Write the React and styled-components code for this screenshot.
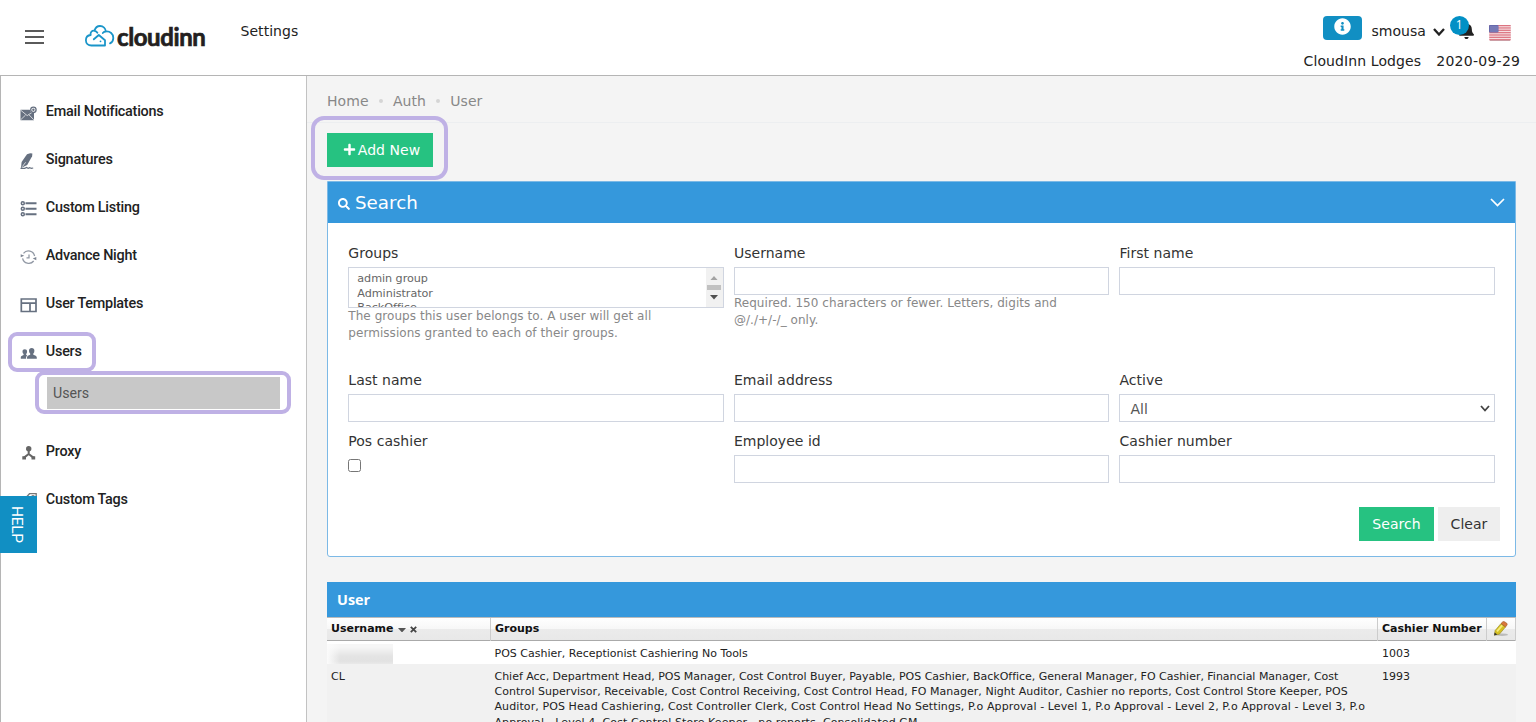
import React from "react";
import styled, { createGlobalStyle } from "styled-components";
import { FaPlus, FaSearch, FaBell, FaInfoCircle } from "react-icons/fa";

const sans = `Verdana, "DejaVu Sans", sans-serif`;
const blue = "#3598dc";
const green = "#26c281";

const Global = createGlobalStyle`
  *, *::before, *::after { box-sizing: border-box; }
  body { margin: 0; background: #f4f4f4; font-family: ${sans}; font-size: 14px; color: #333; overflow: hidden; }
`;

const Page = styled.div`
  position: relative;
  height: 722px;
  overflow: hidden;
  display: flex;
  flex-direction: column;
`;

const Header = styled.header`
  flex: none;
  height: 76px;
  display: flex;
  background: #fff;
  border-bottom: 1px solid #b5b5b5;
  color: #222;
`;

const Burger = styled.button`
  width: 19px;
  height: 14px;
  margin: 30px 0 0 25px;
  padding: 0;
  border: 0;
  background: none;
  display: flex;
  flex-direction: column;
  justify-content: space-between;
  span { height: 2px; background: #5a5a5a; }
`;

const Logo = styled.div`
  display: flex;
  width: 121px;
  margin: 24px 0 0 41px;
  svg { flex: none; margin-top: 1px; }
`;

const Wordmark = styled.span`
  font: 700 24px/27px Lato, sans-serif;
  letter-spacing: -0.4px;
  -webkit-text-stroke: 0.7px #231f20;
  color: #231f20;
  margin: -1px 0 0 2px;
`;

const NavLink = styled.span`
  margin: 22px 0 0 34.5px;
  line-height: 18px;
  font-size: 14px;
  letter-spacing: 0.05px;
`;

const HeaderRight = styled.div`
  margin-left: auto;
  padding: 14px 16px 0 0;
  display: flex;
  flex-direction: column;
`;

const Tools = styled.div`
  display: flex;
  align-items: center;
  height: 27px;
  margin-left: 19px;
`;

const InfoButton = styled.span`
  width: 39px;
  height: 24px;
  border-radius: 4px;
  background: #118fc3;
  color: #fff;
  display: flex;
  align-items: center;
  justify-content: center;
  margin-right: 10px;
  svg { margin-bottom: 2px; }
`;

const UserName = styled.span`
  font-size: 14px;
  width: 55px;
  padding-top: 7px;
`;

const Bell = styled.span`
  position: relative;
  width: 26px;
  height: 25px;
  margin-left: 5px;
  > svg { position: absolute; left: 8px; top: 7px; }
`;

const Badge = styled.span`
  position: absolute;
  left: 0;
  top: 1px;
  width: 19px;
  height: 19px;
  border-radius: 50%;
  background: #0290c5;
  color: #fff;
  font: 12px/18px "Open Sans", sans-serif;
  text-align: center;
`;

const Property = styled.div`
  display: flex;
  gap: 15px;
  line-height: 18px;
  margin-top: 11px;
  span { letter-spacing: 0.1px; }
  span + span { letter-spacing: 0.27px; margin-right: -0.27px; }
`;

const Body = styled.div`
  flex: 1;
  display: flex;
  min-height: 0;
`;

const Sidebar = styled.nav`
  flex: none;
  width: 307px;
  background: #fff;
  border-left: 1px solid #b5b5b5;
  border-right: 1px solid #c2c2c2;
  padding-top: 11px;
  font-family: Roboto, sans-serif;
`;

const NavItem = styled.div`
  height: 48px;
  display: flex;
  align-items: center;
  padding: 1px 0 0 19px;
  font-size: 14.4px;
  letter-spacing: -0.24px;
  font-weight: 500;
  color: #222;
  svg { flex: none; width: 17px; height: 17px; margin: 3px 8.8px 0 0; }
`;

const SubItem = styled.div`
  height: 32px;
  margin: 2px 26px 18px 46px;
  padding-left: 6px;
  background: #c8c8c8;
  color: #555;
  font-size: 14.2px;
  line-height: 32px;
`;

const Main = styled.main`
  flex: 1;
  min-width: 0;
  padding: 0 20px;
`;

const Breadcrumb = styled.div`
  height: 47px;
  margin: 0 -20px 10px;
  padding: 3px 20px 0;
  border-bottom: 1px solid #eceef0;
  display: flex;
  align-items: center;
  color: #888;
  font-size: 14px;
  letter-spacing: 0.05px;
  i { width: 4px; height: 4px; border-radius: 50%; background: #d5d5d5; margin: 0 10.2px; }
`;

const Button = styled.button`
  height: 34px;
  width: ${(p) => p.$w}px;
  border: 0;
  padding: 0;
  background: ${(p) => (p.$plain ? "#eee" : green)};
  color: ${(p) => (p.$plain ? "#333" : "#fff")};
  font: 14px ${sans};
  letter-spacing: 0.05px;
  display: flex;
  align-items: center;
  justify-content: center;
  gap: 2px;
`;

const AddButton = styled(Button)`
  padding-left: 3px;
  svg { margin-bottom: 1px; }
`;

const Panel = styled.section`
  height: 376px;
  margin-top: 14px;
  border: 1px solid #7cb9e6;
  border-radius: 0 0 3px 3px;
  background: #fff;
`;

const PanelHead = styled.div`
  height: 41px;
  background: ${blue};
  color: #fff;
  display: flex;
  align-items: center;
  padding: 0 10px 1px;
  font-size: 18.3px;
  svg:first-child { margin: 4px 5px 0 0; }
  svg:last-child { margin-left: auto; }
`;

const Form = styled.div`
  display: grid;
  grid-template-columns: repeat(3, 375.3px);
  column-gap: 10.3px;
  grid-template-rows: 127px 61px 61px;
  padding: 21px 20px 0 20.3px;
`;

const Field = styled.label`
  display: block;
  font-size: 14px;
  color: #333;
`;

const Label = styled.span`
  display: block;
  line-height: 18px;
  margin-bottom: 5px;
  letter-spacing: 0.03px;
`;

const Input = styled.input`
  display: block;
  width: 100%;
  height: 28px;
  border: 1px solid #d0d5e0;
  background: #fff;
`;

const Help = styled.span`
  display: block;
  width: 335px;
  font-size: 12px;
  line-height: 17px;
  letter-spacing: 0.05px;
  color: #888;
`;

const List = styled.div`
  height: 41px;
  border: 1px solid #d0d5e0;
  display: flex;
  justify-content: space-between;
  overflow: hidden;
  font-size: 11.2px;
  line-height: 14.5px;
  letter-spacing: -0.05px;
  color: #666;
`;

const Options = styled.div`
  padding: 4px 8px;
`;

const Scroll = styled.div`
  width: 17px;
  background: #f1f1f1;
  display: flex;
  flex-direction: column;
  align-items: center;
  padding-top: 7.5px;
  i { width: 14px; height: 5px; background: #c1c1c1; margin: 5px 0; }
`;

const Select = styled.div`
  height: 28px;
  border: 1px solid #d0d5e0;
  padding: 1px 4px 0 10px;
  display: flex;
  align-items: center;
  justify-content: space-between;
  color: #555;
`;

const Check = styled.span`
  display: block;
  width: 13px;
  height: 13px;
  margin-top: 9px;
  border: 1px solid #767676;
  border-radius: 2.5px;
`;

const Actions = styled.div`
  display: flex;
  justify-content: flex-end;
  gap: 4px;
  padding: 14px 15px 0;
`;

const TableTitle = styled.h2`
  margin: 25px 0 0;
  height: 35px;
  padding-left: 10px;
  background: ${blue};
  color: #fff;
  font: 700 14.4px/36px "Open Sans", sans-serif;
`;

const Row = styled.div`
  display: grid;
  grid-template-columns: 163.5px 887.5px 109px 29px;
  height: ${(p) => p.$h}px;
  background: ${(p) => p.$bg};
  color: #222;
  font-size: 11px;
  line-height: 15.2px;
`;

const HeadRow = styled(Row)`
  grid-template-columns: 164px 887px 109px 29px;
  color: #111;
  font-weight: 700;
  background: linear-gradient(#fff 0, #f7f7f7 50%, #ebebeb 51%, #e8e8e8 100%);
  border-top: 1px solid #bbb;
  border-bottom: 1px solid #aaa;
  > div { border-right: 1px solid #ccc; padding: 3px 4px 0; white-space: nowrap; }
  > div:last-child { padding-left: 6px; }
`;

const Cell = styled.div`
  padding: 5px 4px 0;
  white-space: nowrap;
`;

const Line = styled.div`
  letter-spacing: ${(p) => p.$track}px;
`;

const Redacted = styled.div`
  width: 66px;
  height: 20px;
  margin-top: 3px;
  background: linear-gradient(90deg, #fbfbfb 0, #f4f4f400 20%), linear-gradient(#f6f6f6 15%, #e4e4e4 60%, #e2e2e2 85%, #e9e9e9);
`;

const HelpTab = styled.div`
  position: absolute;
  left: 0;
  top: 496px;
  width: 37px;
  height: 57px;
  background: #118fc3;
  color: #fff;
  font: 15.5px/40px Roboto, sans-serif;
  letter-spacing: -0.3px;
  writing-mode: vertical-rl;
  text-align: center;
`;

const Highlight = styled.div`
  position: absolute;
  left: ${(p) => p.$x}px;
  top: ${(p) => p.$y}px;
  width: ${(p) => p.$w}px;
  height: ${(p) => p.$h}px;
  border: 4px solid #bfb1e5;
  border-radius: ${(p) => p.$r || 9}px;
`;

const slate = "#667080";

const CloudIcon = () => (
  <svg width="30" height="23" viewBox="0 0 30 23" fill="none" stroke="#1a95c9" strokeWidth="1.8" strokeLinecap="round" strokeLinejoin="round">
    <path d="M9.5 5.8C10.4 2.6 12.4 1 15 1c3.3 0 5.6 2.3 5.7 5.5M5.7 10C5 7.4 6.9 5.3 9.5 5.8c1.3.2 2.3.9 2.9 1.9M5.7 10C2.7 10.3.9 12.500.9 15.2c0 3.1 2.3 5.3 5.5 5.3H20v-5.200l-6.200-5.300-5 4.300M17.800 8c.7-.8 1.700-1.400 2.900-1.500 4.400-.5 7.600 2.200 7.600 6.400 0 2.300-1.100 4.300-3.300 5.500" />
    <circle cx="15.5" cy="16.3" r=".9" fill="#1a95c9" stroke="none" />
  </svg>
);

const MailIcon = () => (
  <svg viewBox="0 0 17 17" fill={slate}>
    <path d="M.5 4.700h9.300a3.700 3.700 0 0 0 4.200 3v7.500H.5z" />
    <path d="M.7 5.200l6.500 5.400 6.200-4.100M.7 14.800l4.800-4.700M13.800 14.800L9 9.800" fill="none" stroke="#fff" strokeWidth=".7" />
    <circle cx="13.400" cy="4.800" r="2.700" fill="none" stroke={slate} strokeWidth="1.300" />
    <circle cx="13.400" cy="4.800" r="1.200" />
  </svg>
);

const PenIcon = () => (
  <svg viewBox="0 0 17 17" fill={slate}>
    <path d="M10.200.2l2.200.4-.3 2.700L7.200 12.100 1 15l.6-5.900L7 1.300z" />
    <path d="M2.400 13.600L5.600 9.300" stroke="#fff" strokeWidth=".7" />
    <path d="M.5 15.300h4.200l2-.8 1.400.9 1.700-.8 1.400.8 2-.4" fill="none" stroke={slate} strokeWidth="1.200" />
  </svg>
);

const ListIcon = () => (
  <svg viewBox="0 0 17 17" fill="none" stroke={slate} strokeWidth="1.500">
    <circle cx="2.800" cy="2.300" r="1.500" /><circle cx="2.800" cy="7.800" r="1.500" /><circle cx="2.800" cy="13.300" r="1.500" />
    <path d="M5.500 2.300h11M5.500 7.800h11M5.500 13.300h11" strokeWidth="1.900" />
  </svg>
);

const NightIcon = () => (
  <svg viewBox="0 0 17 17" fill="none" stroke="#9299a5" strokeWidth="1.300">
    <path d="M3.500 4.300A6.300 6.300 0 0 1 14.600 7M13.700 12A6.300 6.300 0 0 1 2.600 9.300M9 5.500v3.300H6.500" />
    <path d="M.7 5.300v3l3.500-1.600zM16.300 8v3.200l-3.500-1.600z" fill="#7d8593" stroke="none" />
  </svg>
);

const TemplateIcon = () => (
  <svg viewBox="0 0 17 17" fill="none" stroke={slate} strokeWidth="1.700">
    <path d="M1.300 2h14.700v12.500H1.300zM1.300 6.200h14.700M10 6.200v8.300" />
  </svg>
);

const UsersIcon = () => (
  <svg viewBox="0 0 17 17" fill={slate}>
    <path d="M4.800 4.200c1.400 0 2.300.9 2.300 2.300 0 1-.4 1.900-.9 2.400v1l1.200.6c-.9.6-1.300 1.300-1.300 2.300v1H.8v-1.500c0-1.300 1.300-1.900 2.800-2.400V8.900c-.7-.5-1.100-1.400-1.100-2.400 0-1.400.9-2.300 2.300-2.300z" />
    <path d="M11.700 3c1.700 0 2.700 1.100 2.700 2.700 0 1.200-.4 2.200-1.100 2.900v1.200c1.800.6 3.500 1.200 3.500 2.700v1.300H7v-1.300c0-1.500 1.500-2.100 3.200-2.700V8.600C9.500 7.900 9 6.900 9 5.700 9 4.100 10 3 11.700 3z" />
  </svg>
);

const ProxyIcon = () => (
  <svg viewBox="0 0 17 17" fill="#666">
    <circle cx="8.700" cy="3.700" r="2.700" />
    <path d="M8.700 5.500v4M8.700 9l-4.700 3.600M8.700 9l4.700 3.600" stroke="#666" strokeWidth="2" fill="none" />
    <path d="M2.300 11.200h3.700v3.400H2.300zM11.500 11.200h3.700v3.400h-3.700z" />
  </svg>
);

const TagIcon = () => (
  <svg viewBox="0 0 17 17" fill="none" stroke="#777" strokeWidth="1.300">
    <path d="M9.500.7h6.700v6l-8.500 8.500-6-6z" /><circle cx="13" cy="3.900" r="1.300" />
  </svg>
);

const Flag = () => (
  <svg width="22" height="16" viewBox="0 0 22 16">
    <rect width="22" height="16" rx="2" fill="#f6dfe2" />
    {[0, 1, 2, 3, 4, 5, 6].map((i) => (
      <rect key={i} x=".3" y={i * 2.35} width="21.4" height="1.2" fill="#dc7480" />
    ))}
    <rect width="9.5" height="7.5" rx="1" fill="#6669ac" />
    <path d="M1.5 2h7M1.5 4h7M1.5 6h7" stroke="#b9bbe0" strokeWidth=".8" strokeDasharray="1 1" />
    <path d="M1 15.6h20" stroke="#b98a90" strokeWidth=".7" />
  </svg>
);

const Chevron = ({ w, h, color, stroke }) => (
  <svg width={w} height={h} viewBox={`0 0 ${w} ${h}`} fill="none" stroke={color} strokeWidth={stroke}>
    <path d={`M1 1L${w / 2} ${h - 1.5}L${w - 1} 1`} />
  </svg>
);

const IconSlot = styled.span`
  display: flex;
  margin: ${(p) => p.$m || 0};
`;

const Triangle = ({ up, color }) => (
  <svg width="8" height="4.5" viewBox="0 0 8 4.5"><path d={up ? "M0 4.5L4 0L8 4.5z" : "M0 0h8L4 4.5z"} fill={color} /></svg>
);

const SortMarks = styled.span`
  display: inline-flex;
  align-items: center;
  gap: 4px;
  margin-left: 4px;
`;

const Pencil = () => (
  <svg width="16" height="16" viewBox="0 0 16 16">
    <ellipse cx="9" cy="13.700" rx="6" ry="1.200" fill="#bbb" />
    <path d="M1.500 14.200l.6-4.700L8 2.500l4.500 3.500-6.100 7.200z" fill="#d5c022" stroke="#94862a" strokeWidth=".6" />
    <path d="M4 10.300l5.300-6" stroke="#f6ec7c" strokeWidth="1.800" />
    <path d="M8 2.500L9.800.8q1-.7 2 .1l2 1.400q.8.8.2 1.700l-1.500 2z" fill="#d9783a" stroke="#9b5526" strokeWidth=".6" />
    <path d="M1.200 14.600l.4-3.200 2.700 2.200z" fill="#333" />
  </svg>
);

const menu = [
  [MailIcon, "Email Notifications"],
  [PenIcon, "Signatures"],
  [ListIcon, "Custom Listing"],
  [NightIcon, "Advance Night"],
  [TemplateIcon, "User Templates"],
  [UsersIcon, "Users", "Users"],
  [ProxyIcon, "Proxy"],
  [TagIcon, "Custom Tags"],
];

const groupLines = [
  ["Chief Acc, Department Head, POS Manager, Cost Control Buyer, Payable, POS Cashier, BackOffice, General Manager, FO Cashier, Financial Manager, Cost", -0.015],
  ["Control Supervisor, Receivable, Cost Control Receiving, Cost Control Head, FO Manager, Night Auditor, Cashier no reports, Cost Control Store Keeper, POS", 0.033],
  ["Auditor, POS Head Cashiering, Cost Controller Clerk, Cost Control Head No Settings, P.o Approval - Level 1, P.o Approval - Level 2, P.o Approval - Level 3, P.o", 0.094],
  ["Approval - Level 4, Cost Control Store Keeper - no reports, Consolidated GM", 0.09],
];

const TextField = ({ label, children }) => (
  <Field><Label>{label}</Label><Input />{children}</Field>
);

export default function App() {
  return (
    <Page>
      <Global />
      <Header>
        <Burger><span /><span /><span /></Burger>
        <Logo><CloudIcon /><Wordmark>cloudinn</Wordmark></Logo>
        <NavLink>Settings</NavLink>
        <HeaderRight>
          <Tools>
            <InfoButton><FaInfoCircle size={17} /></InfoButton>
            <UserName>smousa</UserName>
            <IconSlot $m="9px 0 0 6px"><Chevron w={12} h={8} color="#222" stroke={2.3} /></IconSlot>
            <Bell><FaBell size={17} color="#222" /><Badge>1</Badge></Bell>
            <IconSlot $m="10px 0 0 13px"><Flag /></IconSlot>
          </Tools>
          <Property><span>CloudInn Lodges</span><span>2020-09-29</span></Property>
        </HeaderRight>
      </Header>
      <Body>
        <Sidebar>
          {menu.map(([Icon, name, sub]) => (
            <React.Fragment key={name}>
              <NavItem><Icon />{name}</NavItem>
              {sub && <SubItem>{sub}</SubItem>}
            </React.Fragment>
          ))}
        </Sidebar>
        <Main>
          <Breadcrumb>Home<i />Auth<i />User</Breadcrumb>
          <AddButton $w={106}><FaPlus size={13} />Add New</AddButton>
          <Panel>
            <PanelHead>
              <FaSearch size={12} />
              Search
              <Chevron w={15} h={9} color="#fff" stroke={1.7} />
            </PanelHead>
            <Form>
              <Field as="div">
                <Label>Groups</Label>
                <List>
                  <Options>admin group<br />Administrator<br />BackOffice</Options>
                  <Scroll><Triangle up color="#a3a3a3" /><i /><Triangle color="#505050" /></Scroll>
                </List>
                <Help>The groups this user belongs to. A user will get all permissions granted to each of their groups.</Help>
              </Field>
              <TextField label="Username">
                <Help>Required. 150 characters or fewer. Letters, digits and @/./+/-/_ only.</Help>
              </TextField>
              <TextField label="First name" />
              <TextField label="Last name" />
              <TextField label="Email address" />
              <Field as="div">
                <Label>Active</Label>
                <Select>All<Chevron w={10} h={7} color="#444" stroke={1.8} /></Select>
              </Field>
              <Field as="div"><Label>Pos cashier</Label><Check /></Field>
              <TextField label="Employee id" />
              <TextField label="Cashier number" />
            </Form>
            <Actions>
              <Button $w={75}>Search</Button>
              <Button $w={62} $plain>Clear</Button>
            </Actions>
          </Panel>
          <TableTitle>User</TableTitle>
          <HeadRow $h={24}>
            <div>Username<SortMarks><Triangle color="#555" /><svg width="7" height="7" viewBox="0 0 7 7" stroke="#444" strokeWidth="1.8"><path d="M.8.8l5.4 5.4M6.200.8L.8 6.2" /></svg></SortMarks></div>
            <div>Groups</div>
            <div>Cashier Number</div>
            <div><Pencil /></div>
          </HeadRow>
          <Row $h={23} $bg="#fff">
            <Redacted />
            <Cell>POS Cashier, Receptionist Cashiering No Tools</Cell>
            <Cell>1003</Cell>
          </Row>
          <Row $h={70} $bg="#f1f1f1">
            <Cell>CL</Cell>
            <Cell>{groupLines.map(([text, track]) => <Line key={text} $track={track}>{text}</Line>)}</Cell>
            <Cell>1993</Cell>
          </Row>
        </Main>
      </Body>
      <HelpTab>HELP</HelpTab>
      <Highlight $x={8} $y={332} $w={88} $h={40} />
      <Highlight $x={35} $y={371} $w={256} $h={43} />
      <Highlight $x={311} $y={116} $w={137} $h={64} $r={13} />
    </Page>
  );
}
